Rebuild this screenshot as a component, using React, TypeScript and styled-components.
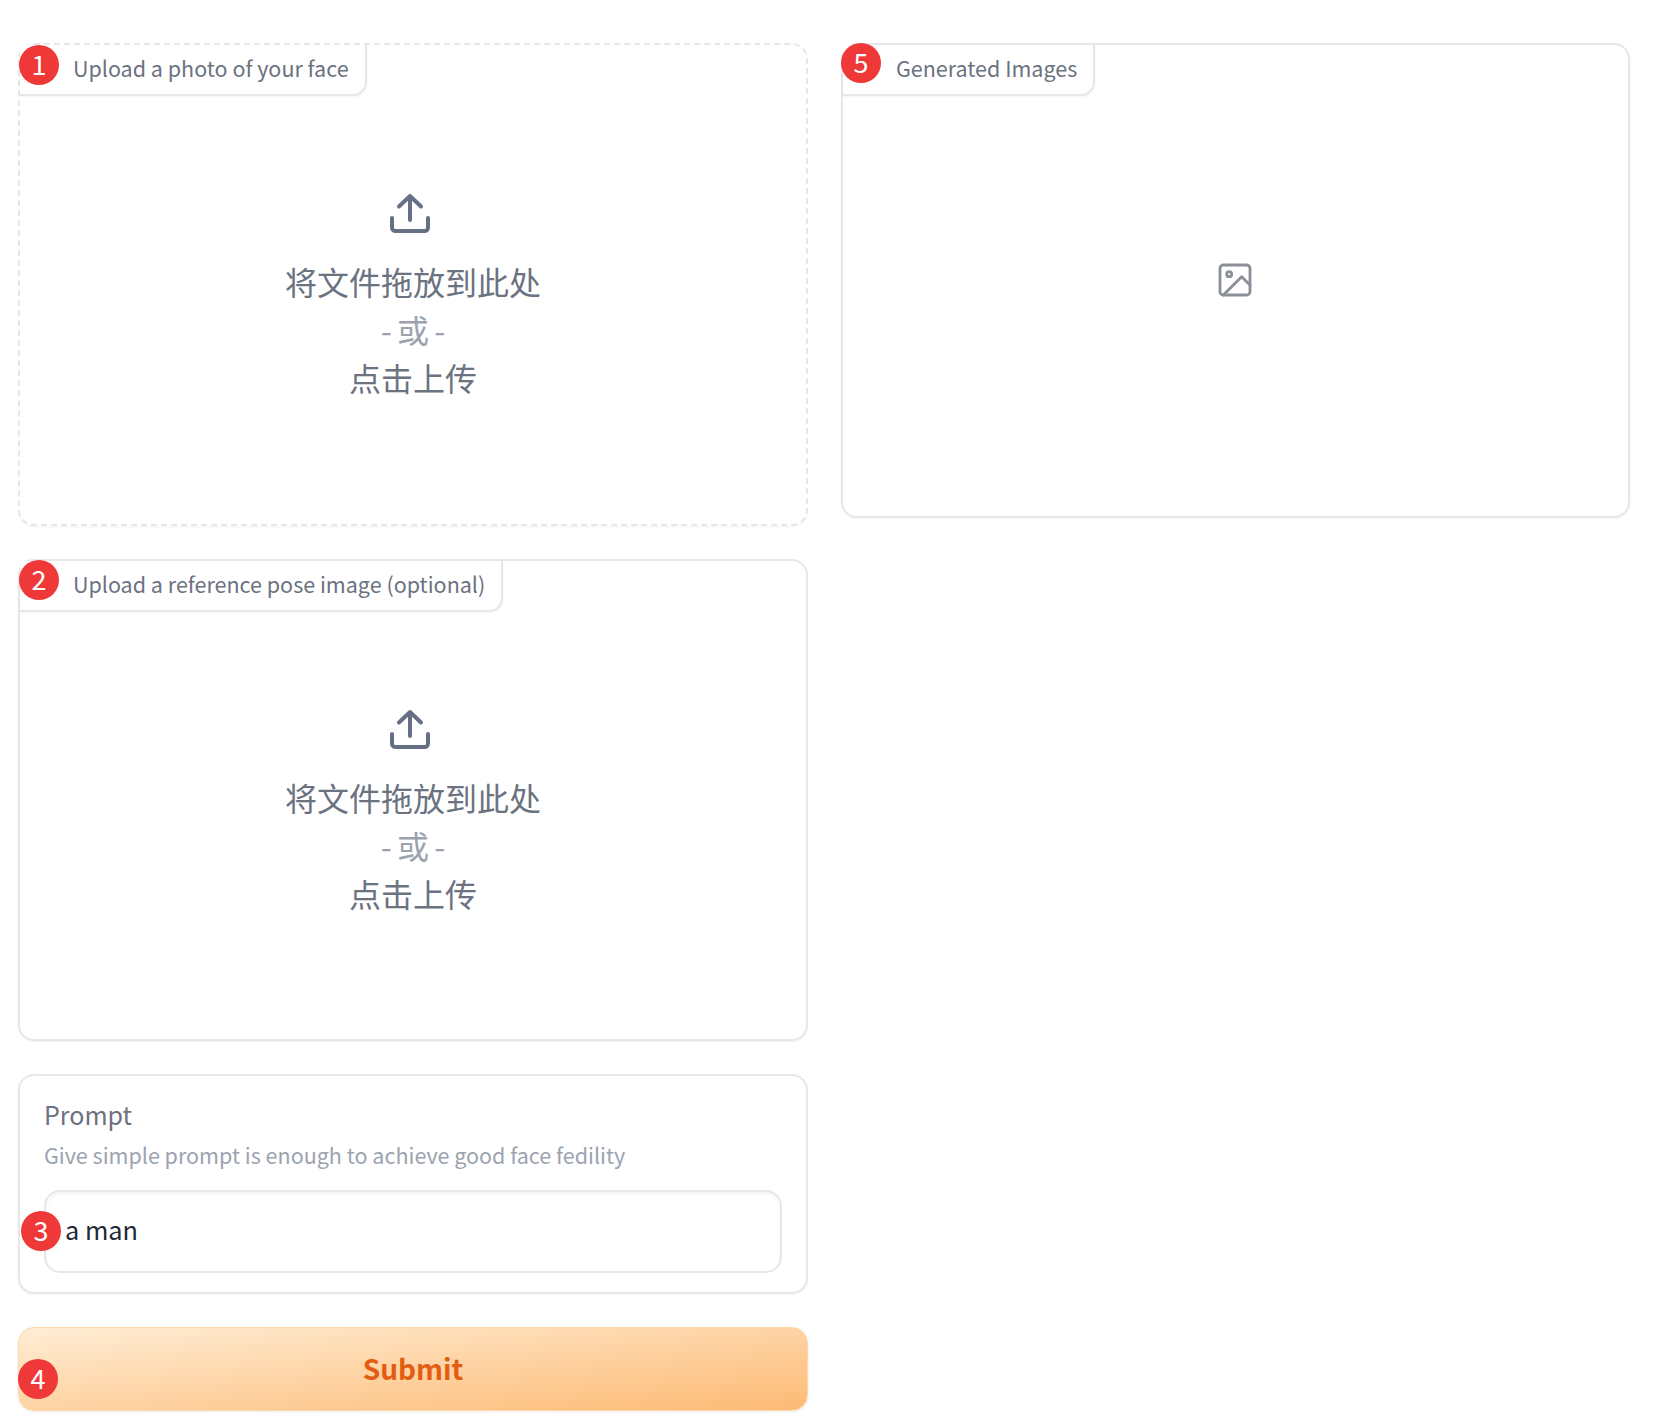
import React from 'react'
import styled, { createGlobalStyle } from 'styled-components'

const GlobalStyle = createGlobalStyle`
  html, body {
    margin: 0;
    padding: 0;
    background: #fff;
    font-family: "Noto Sans CJK SC", "Noto Sans", sans-serif;
  }
  * {
    box-sizing: border-box;
  }
`
const Page = styled.div`
  width: 1680px;
  height: 1427px;
  padding: 43px 0 0 18px;
  display: grid;
  grid-template-columns: 790px 789px;
  column-gap: 33px;
  align-items: start;
`
const Column = styled.div`
  display: flex;
  flex-direction: column;
  gap: 33px;
`
const Panel = styled.div<{ $dashed?: boolean; $height: number }>`
  position: relative;
  height: ${(p) => p.$height}px;
  border: 2px ${(p) => (p.$dashed ? 'dashed' : 'solid')} #e5e7eb;
  border-radius: 16px;
  background: #fff;
  box-shadow: 0 1px 2px rgba(0, 0, 0, 0.05);
`
const BlockLabel = styled.div`
  position: absolute;
  top: 0;
  left: 0;
  height: 51px;
  padding: 0 16px 4px 53px;
  display: flex;
  align-items: center;
  font-size: 21.5px;
  color: #6b7280;
  background: #fff;
  border-right: 2px solid #e5e7eb;
  border-bottom: 2px solid #e5e7eb;
  border-radius: 0 0 14px 0;
  box-shadow: 0 1px 2px rgba(0, 0, 0, 0.05);
  white-space: nowrap;
`
const Badge = styled.div<{ $top: number; $left: number }>`
  position: absolute;
  top: ${(p) => p.$top}px;
  left: ${(p) => p.$left}px;
  width: 40px;
  height: 40px;
  padding-bottom: 4px;
  border-radius: 50%;
  background: #ef3838;
  color: #fff;
  font-size: 27px;
  font-weight: 400;
  display: flex;
  align-items: center;
  justify-content: center;
  z-index: 2;
`
const Dropzone = styled.div`
  height: 100%;
  padding-top: 148px;
  display: flex;
  flex-direction: column;
  align-items: center;
`
const UploadIcon = styled.svg`
  width: 42px;
  height: 42px;
  margin: 0 6px 22px 0;
  color: #667085;
`
const DropLine = styled.div<{ $muted?: boolean }>`
  font-size: 32px;
  line-height: 48px;
  word-spacing: ${(p) => (p.$muted ? '-2px' : '0')};
  color: ${(p) => (p.$muted ? '#9ca3af' : '#6b7280')};
`
const EmptyState = styled.div`
  height: 100%;
  padding: 0 2px 2px 0;
  display: flex;
  align-items: center;
  justify-content: center;
`
const ImageIcon = styled.svg`
  width: 40px;
  height: 40px;
  color: #8b8f97;
`
const PromptPanel = styled(Panel)`
  padding: 18px 24px 0;
`
const PromptTitle = styled.div`
  font-size: 25px;
  line-height: 40px;
  color: #6b7280;
`
const PromptInfo = styled.div`
  padding-top: 1px;
  font-size: 21.5px;
  line-height: 40px;
  color: #9ca3af;
`
const PromptInput = styled.div`
  margin-top: 15px;
  height: 83px;
  padding: 0 0 5px 19px;
  display: flex;
  align-items: center;
  font-size: 25.300px;
  color: #1f2937;
  border: 2px solid #e5e7eb;
  border-radius: 16px;
  box-shadow: inset 0 2px 4px rgba(0, 0, 0, 0.05);
`
const SubmitButton = styled.button`
  position: relative;
  height: 84px;
  padding: 0 0 2px;
  border: 1px solid #fed7aa;
  border-radius: 16px;
  background: linear-gradient(to bottom right, #ffedd5, #fdba74);
  color: #e25c12;
  font-family: inherit;
  font-size: 28px;
  font-weight: 600;
  box-shadow: 0 1px 3px rgba(0, 0, 0, 0.08);
`

const Upload = () => (
  <Dropzone>
    <UploadIcon viewBox="0 0 42 42" fill="none" stroke="currentColor" strokeWidth="4" strokeLinecap="round" strokeLinejoin="round">
      <path d="M21 27V3M10 13.5 21 3l11 10.5" />
      <path d="M3 25v9.5c0 2 1.5 3.5 3.500 3.500h29c2 0 3.500-1.500 3.500-3.500V25" />
    </UploadIcon>
    <DropLine>将文件拖放到此处</DropLine>
    <DropLine $muted>- 或 -</DropLine>
    <DropLine>点击上传</DropLine>
  </Dropzone>
)

const App = () => {
  return (
    <>
      <GlobalStyle />
      <Page>
        <Column>
          <Panel $dashed $height={483}>
            <Badge $top={0} $left={-1}>1</Badge>
            <BlockLabel>Upload a photo of your face</BlockLabel>
            <Upload />
          </Panel>
          <Panel $height={482}>
            <Badge $top={-1} $left={-1}>2</Badge>
            <BlockLabel>Upload a reference pose image (optional)</BlockLabel>
            <Upload />
          </Panel>
          <PromptPanel $height={220}>
            <PromptTitle>Prompt</PromptTitle>
            <PromptInfo>Give simple prompt is enough to achieve good face fedility</PromptInfo>
            <PromptInput>a man</PromptInput>
            <Badge $top={135} $left={1}>3</Badge>
          </PromptPanel>
          <SubmitButton>
            Submit
            <Badge $top={31} $left={-1}>4</Badge>
          </SubmitButton>
        </Column>
        <Column>
          <Panel $height={475}>
            <Badge $top={-2} $left={-2}>5</Badge>
            <BlockLabel>Generated Images</BlockLabel>
            <EmptyState>
              <ImageIcon viewBox="0 0 24 24" fill="none" stroke="currentColor" strokeWidth="1.7" strokeLinecap="round" strokeLinejoin="round">
                <rect x="3" y="3" width="18" height="18" rx="2" />
                <circle cx="8.500" cy="8.500" r="1.500" />
                <path d="M21 15l-5-5L5 21" />
              </ImageIcon>
            </EmptyState>
          </Panel>
        </Column>
      </Page>
    </>
  )
}

export default App
